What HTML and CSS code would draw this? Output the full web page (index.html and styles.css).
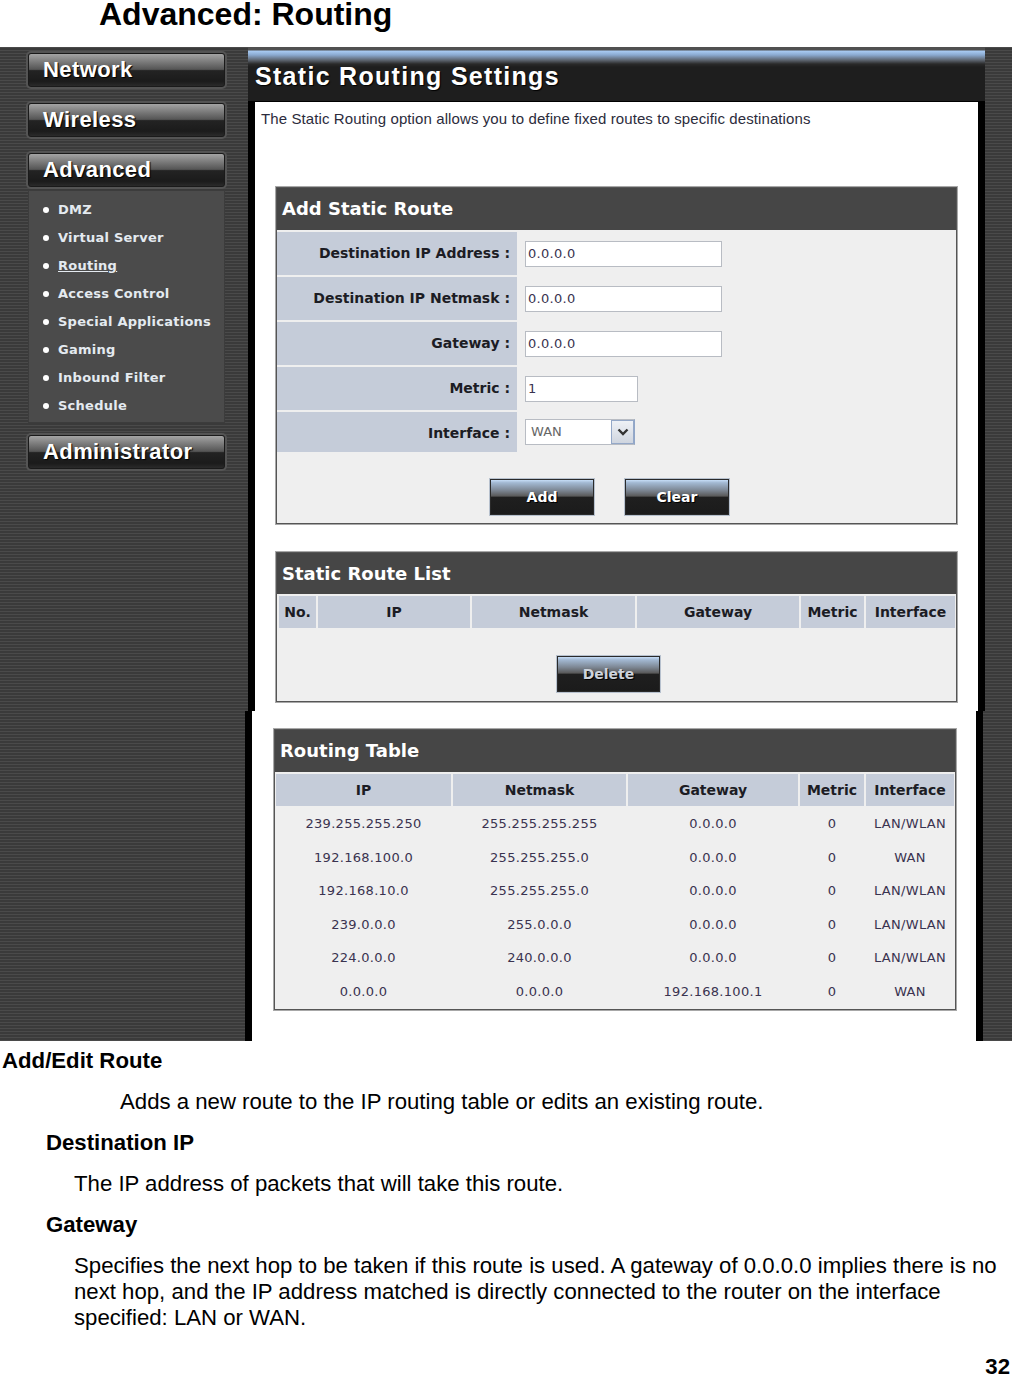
FILE: index.html
```html
<!DOCTYPE html>
<html lang="en">
<head>
<meta charset="UTF-8">
<meta name="viewport" content="width=device-width, initial-scale=1.0">
<title>Advanced: Routing</title>
<link rel="stylesheet" href="styles.css">
</head>
<body>
<h1 class="page-title">Advanced: Routing</h1>

<div class="shot">
    <div class="sidebar">
        <div class="nav-btn">Network</div>
        <div class="nav-btn">Wireless</div>
        <div class="nav-btn nav-open">Advanced</div>
        <ul class="submenu">
            <li>DMZ</li>
            <li>Virtual Server</li>
            <li><a href="#">Routing</a></li>
            <li>Access Control</li>
            <li>Special Applications</li>
            <li>Gaming</li>
            <li>Inbound Filter</li>
            <li>Schedule</li>
        </ul>
        <div class="nav-btn">Administrator</div>
    </div>

    <div class="main">
        <div class="panel panel-top">
            <div class="panel-head">Static Routing Settings</div>
            <div class="panel-body">
                <p class="intro">The Static Routing option allows you to define fixed routes to specific destinations</p>

                <div class="box add-box">
                    <div class="box-head">Add Static Route</div>
                    <div class="form-row">
                        <div class="form-label">Destination IP Address :</div>
                        <div class="form-field"><input class="txt" type="text" value="0.0.0.0"></div>
                    </div>
                    <div class="form-row">
                        <div class="form-label">Destination IP Netmask :</div>
                        <div class="form-field"><input class="txt" type="text" value="0.0.0.0"></div>
                    </div>
                    <div class="form-row">
                        <div class="form-label">Gateway :</div>
                        <div class="form-field"><input class="txt" type="text" value="0.0.0.0"></div>
                    </div>
                    <div class="form-row">
                        <div class="form-label">Metric :</div>
                        <div class="form-field"><input class="txt txt-short" type="text" value="1"></div>
                    </div>
                    <div class="form-row form-row-last">
                        <div class="form-label">Interface :</div>
                        <div class="form-field">
                            <div class="select">
                                <span class="select-val">WAN</span>
                                <span class="select-arrow">
                                    <svg width="12" height="8" viewBox="0 0 12 8"><path d="M1.5 1.5 L6 6 L10.5 1.5" fill="none" stroke="#333" stroke-width="2.4"/></svg>
                                </span>
                            </div>
                        </div>
                    </div>
                    <div class="btn-row">
                        <span class="btn">Add</span>
                        <span class="btn">Clear</span>
                    </div>
                </div>

                <div class="box list-box">
                    <div class="box-head">Static Route List</div>
                    <div class="grid list-cols head-row">
                        <div>No.</div>
                        <div>IP</div>
                        <div>Netmask</div>
                        <div>Gateway</div>
                        <div>Metric</div>
                        <div>Interface</div>
                    </div>
                    <div class="btn-row btn-row-list">
                        <span class="btn btn-off">Delete</span>
                    </div>
                </div>
            </div>
        </div>

        <div class="panel panel-low">
            <div class="panel-body">
                <div class="box table-box">
                    <div class="box-head">Routing Table</div>
                    <div class="grid route-cols head-row">
                        <div>IP</div>
                        <div>Netmask</div>
                        <div>Gateway</div>
                        <div>Metric</div>
                        <div>Interface</div>
                    </div>
                    <div class="grid route-cols data-row">
                        <div>239.255.255.250</div><div>255.255.255.255</div><div>0.0.0.0</div><div>0</div><div>LAN/WLAN</div>
                    </div>
                    <div class="grid route-cols data-row">
                        <div>192.168.100.0</div><div>255.255.255.0</div><div>0.0.0.0</div><div>0</div><div>WAN</div>
                    </div>
                    <div class="grid route-cols data-row">
                        <div>192.168.10.0</div><div>255.255.255.0</div><div>0.0.0.0</div><div>0</div><div>LAN/WLAN</div>
                    </div>
                    <div class="grid route-cols data-row">
                        <div>239.0.0.0</div><div>255.0.0.0</div><div>0.0.0.0</div><div>0</div><div>LAN/WLAN</div>
                    </div>
                    <div class="grid route-cols data-row">
                        <div>224.0.0.0</div><div>240.0.0.0</div><div>0.0.0.0</div><div>0</div><div>LAN/WLAN</div>
                    </div>
                    <div class="grid route-cols data-row">
                        <div>0.0.0.0</div><div>0.0.0.0</div><div>192.168.100.1</div><div>0</div><div>WAN</div>
                    </div>
                </div>
            </div>
        </div>
    </div>
</div>

<div class="doc">
    <h3 class="term">Add/Edit Route</h3>
    <p class="desc-wide">Adds a new route to the IP routing table or edits an existing route.</p>
    <h3 class="sub-term">Destination IP</h3>
    <p class="sub-desc">The IP address of packets that will take this route.</p>
    <h3 class="sub-term">Gateway</h3>
    <p class="sub-desc">Specifies the next hop to be taken if this route is used. A gateway of 0.0.0.0 implies there is no next hop, and the IP address matched is directly connected to the router on the interface specified: LAN or WAN.</p>
    <div class="page-num">32</div>
</div>
</body>
</html>
```

FILE: styles.css
```css
* {
    box-sizing: border-box;
}

body {
    margin: 0;
    width: 1012px;
    background: #fff;
    color: #000;
    font-family: "Liberation Sans", Arial, sans-serif;
}

.page-title {
    margin: 0 0 19px 99px;
    font-size: 32px;
    line-height: 28px;
    font-weight: 700;
}

/* router screenshot */
.shot {
    display: flex;
    height: 994px;
    background: repeating-linear-gradient(to bottom, #4a4a4a 0, #4a4a4a 1px, #3a3a3a 1px, #3a3a3a 3px);
}

.sidebar {
    width: 245px;
    flex: none;
    padding: 6px 0 0 28px;
}

.nav-btn {
    width: 197px;
    height: 34px;
    margin-bottom: 16px;
    padding-left: 14px;
    border: 1px solid #1a1a1a;
    border-radius: 3px;
    background: linear-gradient(to bottom, #a4a4a4 0%, #7a7a7a 25%, #555 48%, #232323 52%, #1b1b1b 85%, #2a2a2a 100%);
    box-shadow: 0 0 0 2px #545454;
    color: #fff;
    font-size: 22px;
    font-weight: 700;
    line-height: 32px;
    letter-spacing: 0.4px;
    text-shadow: 1px 1px 1px #000;
}

.nav-open {
    margin-bottom: 3px;
}

.submenu {
    width: 197px;
    margin: 0 0 12px;
    padding: 5px 0 2px;
    list-style: none;
    background: #4b4b4b;
    border: 1px solid #3c3c3c;
    font-family: "DejaVu Sans", sans-serif;
    font-size: 13px;
    font-weight: 700;
    line-height: 28px;
    letter-spacing: 0.25px;
    color: #e4eaf0;
}

.submenu li {
    display: flex;
    align-items: center;
    padding-left: 14px;
}

.submenu li::before {
    content: "";
    width: 6px;
    height: 6px;
    margin-right: 9px;
    border-radius: 50%;
    background: #fff;
}

.submenu a {
    color: #e4eaf0;
}

.main {
    width: 740px;
    flex: none;
    display: flex;
    flex-direction: column;
}

.panel {
    background: #000;
}

.panel-top {
    width: 737px;
    height: 664px;
    margin-left: 3px;
}

.panel-low {
    width: 738px;
    height: 330px;
}

.panel-head {
    height: 55px;
    padding: 14px 0 0 7px;
    background: linear-gradient(to bottom, #505050 0, #505050 3px, #a9cbf3 4px, #8aa9cf 8px, #5f6772 13px, #2a2a2a 17px, #1e1e1e 20px, #1e1e1e 54px, #000 54px);
    color: #fff;
    font-size: 25px;
    font-weight: 700;
    line-height: 30px;
    letter-spacing: 1.3px;
    text-shadow: 1px 1px 1px #000;
}

.panel-body {
    height: 100%;
    margin: 0 7px;
    background: #fff;
}

.panel-top .panel-body {
    height: 609px;
}

.intro {
    margin: 0;
    padding: 8px 0 0 6px;
    color: #2c2c3c;
    font-size: 15px;
    line-height: 18px;
    letter-spacing: 0.1px;
}

.box {
    margin: 0 21px;
    background: #efefef;
    border: 1px solid #555;
    box-shadow: 0 0 0 1px #a8a8a8;
    font-family: "DejaVu Sans", sans-serif;
}

.add-box {
    margin-top: 59px;
}

.list-box {
    margin-top: 28px;
}

.list-box .box-head {
    height: 41px;
    line-height: 41px;
}

.panel-low .panel-body {
    padding-top: 18px;
}

.table-box {
    margin: 0 20px 0 22px;
}

.box-head {
    height: 42px;
    padding-left: 5px;
    background: #464646;
    color: #fff;
    font-size: 18px;
    font-weight: 700;
    line-height: 42px;
}

.form-row {
    display: flex;
    height: 43px;
    margin-top: 2px;
}

.form-row-last {
    height: 40px;
}

.form-label {
    width: 240px;
    padding-right: 7px;
    background: #c5ccd9;
    color: #1c1c24;
    font-size: 14px;
    font-weight: 700;
    text-align: right;
    line-height: 43px;
}

.form-field {
    display: flex;
    align-items: center;
    padding-left: 8px;
}

.txt {
    width: 197px;
    height: 26px;
    margin: 0;
    padding: 0 2px;
    border: 1px solid #b8bcc3;
    background: #fff;
    color: #3a3350;
    font-family: "DejaVu Sans", sans-serif;
    font-size: 13px;
    letter-spacing: 0.3px;
}

.txt-short {
    width: 113px;
}

.select {
    display: flex;
    width: 110px;
    height: 26px;
    border: 1px solid #b8bcc3;
    border-right-color: #90a6c8;
    background: #fff;
}

.select-val {
    flex: 1;
    padding-left: 5px;
    color: #666;
    font-size: 13px;
    line-height: 24px;
}

.select-arrow {
    display: flex;
    align-items: center;
    justify-content: center;
    width: 23px;
    border: 1px solid #94a8c8;
    background: linear-gradient(to bottom, #eef1f6, #cfd5df);
}

.btn-row {
    display: flex;
    justify-content: center;
    gap: 31px;
    padding: 27px 14px 8px 0;
}

.btn-row-list {
    padding: 28px 16px 9px 0;
}

.btn {
    width: 104px;
    height: 36px;
    border: 1px solid #2a2a2a;
    box-shadow: 0 0 0 1px #b7c1ce;
    background: linear-gradient(to bottom, #c6ddf7 0, #a3b9d3 8%, #7d8794 30%, #5a5a5a 47%, #1f1f1f 51%, #1b1b1b 100%);
    color: #fff;
    font-size: 14px;
    font-weight: 700;
    line-height: 34px;
    text-align: center;
    text-shadow: 1px 1px 0 #000;
}

.btn-off {
    width: 103px;
    color: #cdd3dc;
}

.grid {
    display: grid;
    gap: 2px;
}

.list-cols {
    grid-template-columns: 37px 152px 163px 162px 63px 89px;
    margin: 2px 1px 0 2px;
}

.route-cols {
    grid-template-columns: 175px 173px 170px 64px 88px;
    margin: 0 1px 0 1px;
}

.head-row {
    height: 32px;
    margin-top: 2px;
}

.table-box .head-row {
    margin-bottom: 1px;
}

.head-row div {
    background: #c5ccd9;
    color: #1c1c24;
    font-size: 14px;
    font-weight: 700;
    line-height: 32px;
    text-align: center;
}

.data-row {
    height: 33.6px;
}

.data-row div {
    color: #3a3350;
    font-size: 13px;
    letter-spacing: 0.3px;
    line-height: 33.6px;
    text-align: center;
}

/* manual text */
.doc {
    padding-top: 7px;
    font-size: 22.2px;
    line-height: 26px;
}

.doc h3,
.doc p {
    margin: 0 0 15px;
    font-size: 22.2px;
}

.term {
    padding-left: 2px;
}

.desc-wide {
    padding-left: 120px;
}

.sub-term {
    padding-left: 46px;
}

.sub-desc {
    padding-left: 74px;
}

.page-num {
    margin-top: 25px;
    padding-right: 2px;
    font-weight: 700;
    line-height: 22px;
    text-align: right;
}
```
